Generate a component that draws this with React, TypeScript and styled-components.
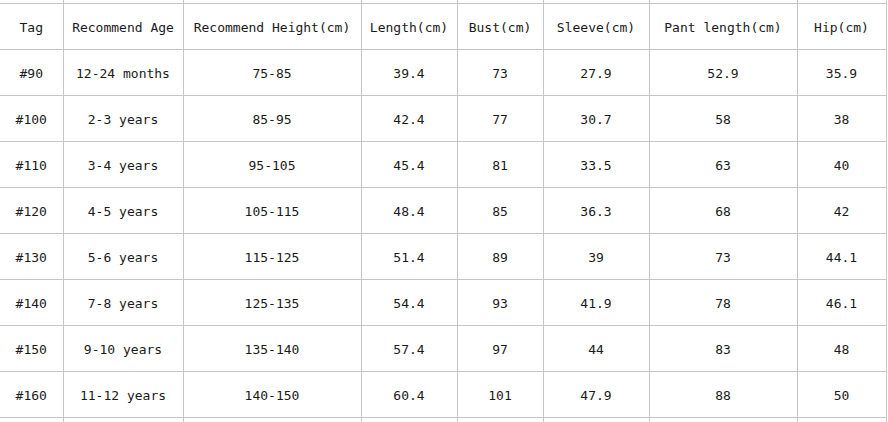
import { createGlobalStyle, styled } from "styled-components";

const GlobalStyle = createGlobalStyle`
  html, body {
    margin: 0;
    padding: 0;
    background: #fff;
  }
`;

const columns = [
  { title: "Tag", width: 63 },
  { title: "Recommend Age", width: 120 },
  { title: "Recommend Height(cm)", width: 178 },
  { title: "Length(cm)", width: 96 },
  { title: "Bust(cm)", width: 86 },
  { title: "Sleeve(cm)", width: 106 },
  { title: "Pant length(cm)", width: 148 },
  { title: "Hip(cm)", width: 89 },
];

const rows = [
  ["#90", "12-24 months", "75-85", "39.4", "73", "27.9", "52.9", "35.9"],
  ["#100", "2-3 years", "85-95", "42.4", "77", "30.7", "58", "38"],
  ["#110", "3-4 years", "95-105", "45.4", "81", "33.5", "63", "40"],
  ["#120", "4-5 years", "105-115", "48.4", "85", "36.3", "68", "42"],
  ["#130", "5-6 years", "115-125", "51.4", "89", "39", "73", "44.1"],
  ["#140", "7-8 years", "125-135", "54.4", "93", "41.9", "78", "46.1"],
  ["#150", "9-10 years", "135-140", "57.4", "97", "44", "83", "48"],
  ["#160", "11-12 years", "140-150", "60.4", "101", "47.9", "88", "50"],
];

const App = () => {
  return (
    <Page>
      <GlobalStyle />
      <SizeTable>
        <colgroup>
          {columns.map((c) => (
            <col key={c.title} style={{ width: c.width }} />
          ))}
        </colgroup>
        <tbody>
          <EdgeRow $height={3}>
            {columns.map((c) => (
              <Cell key={c.title} />
            ))}
          </EdgeRow>
          <Row>
            {columns.map((c) => (
              <Cell key={c.title}>{c.title}</Cell>
            ))}
          </Row>
          {rows.map((r) => (
            <Row key={r[0]}>
              {r.map((v, i) => (
                <Cell key={i}>{v}</Cell>
              ))}
            </Row>
          ))}
          <EdgeRow $height={5}>
            {columns.map((c) => (
              <Cell key={c.title} />
            ))}
          </EdgeRow>
        </tbody>
      </SizeTable>
    </Page>
  );
};

export default App;

const Page = styled.div`
  width: 888px;
  height: 422px;
  overflow: hidden;
  background: #fff;
`;

const SizeTable = styled.table`
  border-collapse: collapse;
  table-layout: fixed;
  width: 886px;

  font-family: "DejaVu Sans Mono", "Liberation Mono", monospace;
  font-size: 13px;
  color: #1a1a1a;
`;

const Row = styled.tr`
  height: 46px;
`;

const EdgeRow = styled.tr<{ $height: number }>`
  height: ${(p) => p.$height}px;

  td {
    padding: 0;
    border-top: none;
    border-bottom: none;
  }
`;

const Cell = styled.td`
  padding: 2px 0 0;
  text-align: center;
  vertical-align: middle;
  white-space: nowrap;
  border: 1px solid #c6c6c6;

  &:first-child {
    border-left: none;
  }
`;
